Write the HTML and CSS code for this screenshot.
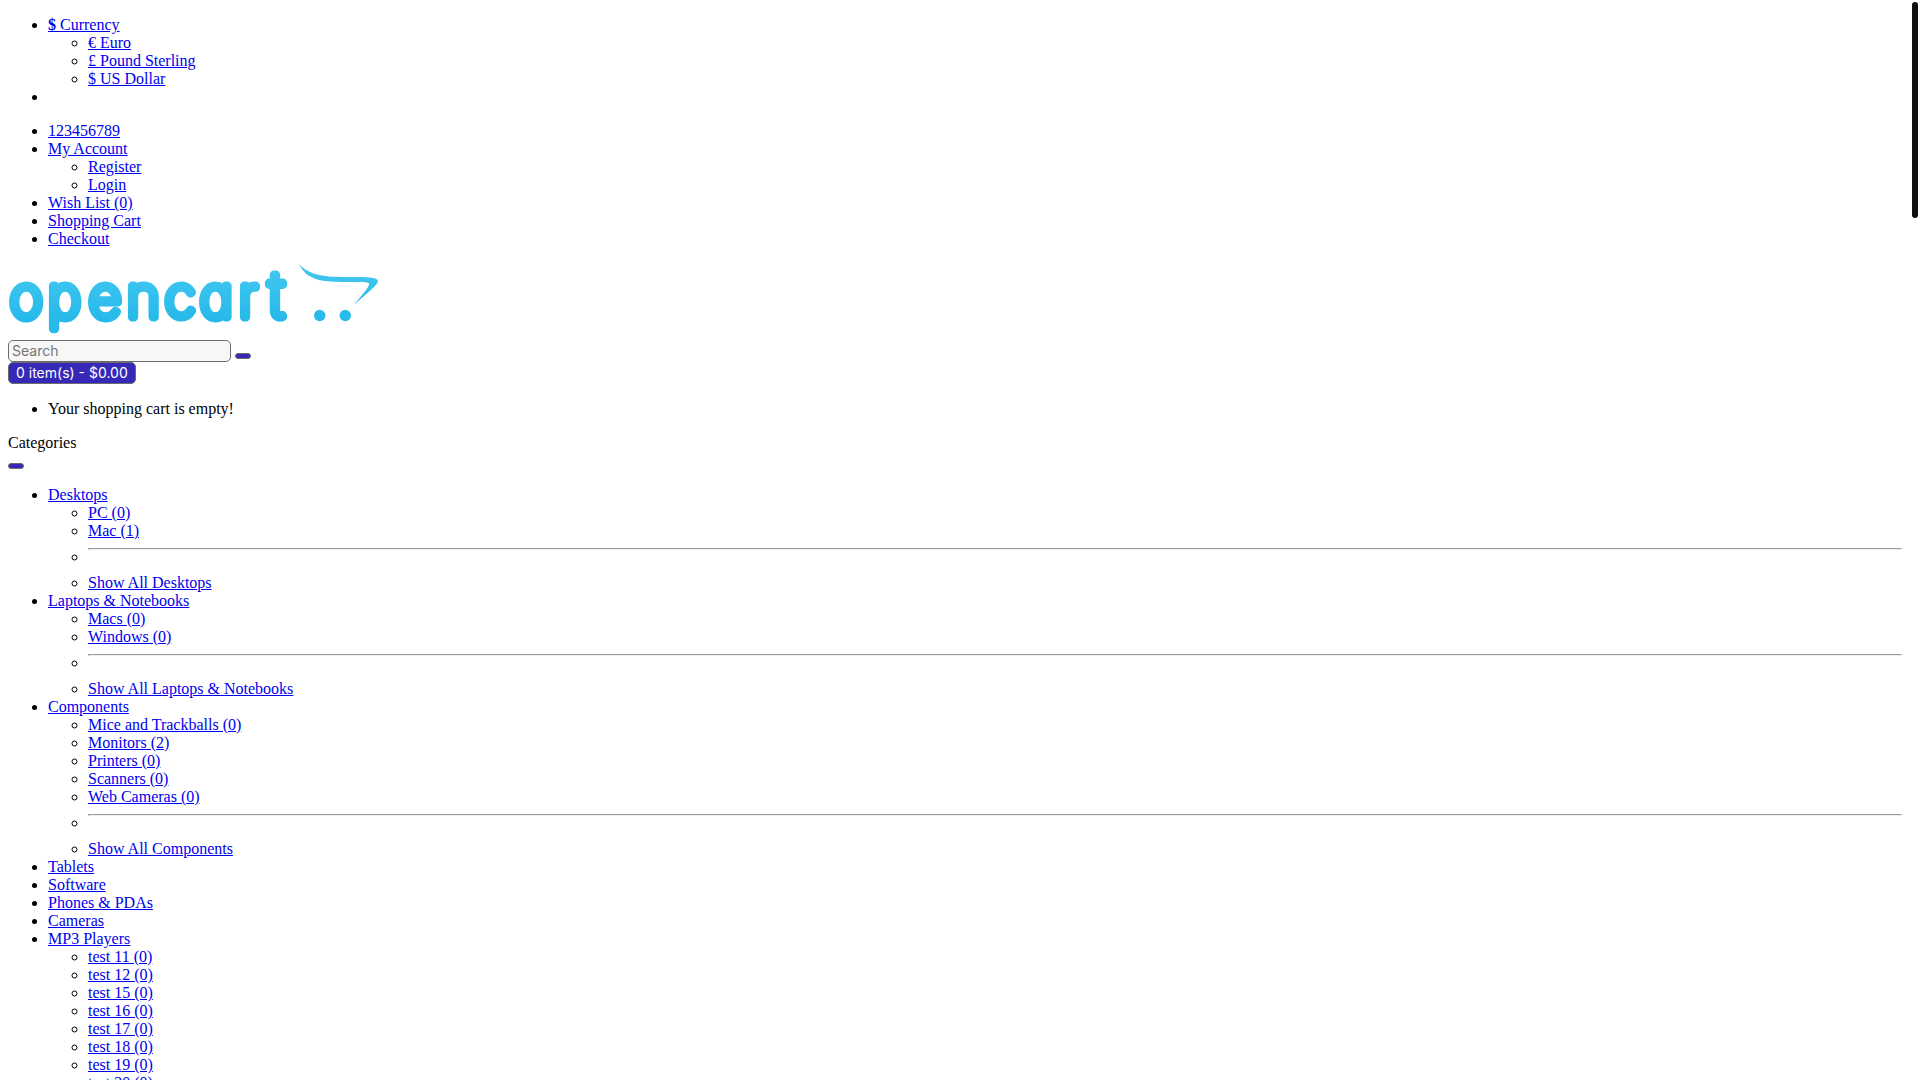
FILE: index.html
```html
<!DOCTYPE html>
<html lang="en">
<head>
<meta charset="utf-8">
<title>Your Store</title>
<link rel="stylesheet" href="styles.css">
</head>
<body>
<div class="page">
  <nav aria-label="Top">
    <ul>
      <li><a href="#"><strong>$</strong> Currency</a>
        <ul>
          <li><a href="#">€ Euro</a></li>
          <li><a href="#">£ Pound Sterling</a></li>
          <li><a href="#">$ US Dollar</a></li>
        </ul>
      </li>
      <li></li>
    </ul>
    <ul>
      <li><a href="#">123456789</a></li>
      <li><a href="#">My Account</a>
        <ul>
          <li><a href="#">Register</a></li>
          <li><a href="#">Login</a></li>
        </ul>
      </li>
      <li><a href="#">Wish List (0)</a></li>
      <li><a href="#">Shopping Cart</a></li>
      <li><a href="#">Checkout</a></li>
    </ul>
  </nav>
  <header>
    <div class="brand">
      <a href="#" aria-label="Your Store"><svg class="logo" viewBox="0 0 371 72" width="371" height="72">
        <defs>
          <linearGradient id="sky" gradientUnits="userSpaceOnUse" x1="0" y1="0" x2="0" y2="72">
            <stop offset="0" stop-color="#44c8f0"/>
            <stop offset="0.8" stop-color="#26b9ea"/>
          </linearGradient>
        </defs>
        <text class="wordmark" y="53" x="2 40 81 119 157 192 231">opencar</text>
        <text class="wordmark wordmark-tall" y="53" x="261">t</text>
        <path fill="url(#sky)" d="M291 0C302 12 318 13 340 13C357 13 370 13 370 17C370 21 358 30 346 41C351 34 359 26 361 21C362 18 358 18 348 18C332 18 322 18 311 16C300 13 295 8 291 0Z"/>
        <circle fill="url(#sky)" cx="311.700" cy="51.500" r="5.700"/>
        <circle fill="url(#sky)" cx="337.300" cy="51.500" r="5.700"/>
      </svg></a>
    </div>
    <div>
      <input class="search" type="text" placeholder="Search" aria-label="Search">
      <button class="btn" type="button" aria-label="Submit search"></button>
    </div>
    <div class="cart">
      <button class="btn" type="button">0 item(s) - $0.00</button>
      <ul>
        <li>Your shopping cart is empty!</li>
      </ul>
    </div>
  </header>
  <nav aria-label="Categories">
    <div>Categories</div>
    <button class="btn" type="button" aria-label="Toggle categories"></button>
    <ul>
      <li><a href="#">Desktops</a>
        <ul>
          <li><a href="#">PC (0)</a></li>
          <li><a href="#">Mac (1)</a></li>
          <li><hr></li>
          <li><a href="#">Show All Desktops</a></li>
        </ul>
      </li>
      <li><a href="#">Laptops &amp; Notebooks</a>
        <ul>
          <li><a href="#">Macs (0)</a></li>
          <li><a href="#">Windows (0)</a></li>
          <li><hr></li>
          <li><a href="#">Show All Laptops &amp; Notebooks</a></li>
        </ul>
      </li>
      <li><a href="#">Components</a>
        <ul>
          <li><a href="#">Mice and Trackballs (0)</a></li>
          <li><a href="#">Monitors (2)</a></li>
          <li><a href="#">Printers (0)</a></li>
          <li><a href="#">Scanners (0)</a></li>
          <li><a href="#">Web Cameras (0)</a></li>
          <li><hr></li>
          <li><a href="#">Show All Components</a></li>
        </ul>
      </li>
      <li><a href="#">Tablets</a></li>
      <li><a href="#">Software</a></li>
      <li><a href="#">Phones &amp; PDAs</a></li>
      <li><a href="#">Cameras</a></li>
      <li><a href="#">MP3 Players</a>
        <ul>
          <li><a href="#">test 11 (0)</a></li>
          <li><a href="#">test 12 (0)</a></li>
          <li><a href="#">test 15 (0)</a></li>
          <li><a href="#">test 16 (0)</a></li>
          <li><a href="#">test 17 (0)</a></li>
          <li><a href="#">test 18 (0)</a></li>
          <li><a href="#">test 19 (0)</a></li>
          <li><a href="#">test 20 (0)</a></li>
        </ul>
      </li>
    </ul>
  </nav>
</div>
<div class="scroll-thumb" aria-hidden="true"></div>
</body>
</html>
```

FILE: styles.css
```css
body {
  margin: 0;
  background: #fff;
  color: #000;
  font-family: "Times New Roman", "Liberation Serif", serif;
  font-size: 16px;
}

.page {
  box-sizing: border-box;
  height: 100vh;
  padding: 0 18px 0 8px;
  overflow-y: auto;
  scrollbar-width: none;
}

a {
  color: #0000ee;
}

.logo {
  overflow: visible;
}

.wordmark {
  font-family: Inter, sans-serif;
  font-size: 56px;
  font-weight: 100;
  font-feature-settings: "cv11";
  fill: url(#sky);
  stroke: url(#sky);
  stroke-width: 9px;
  stroke-linecap: round;
  stroke-linejoin: round;
}

.wordmark-tall {
  font-size: 62px;
}

.search,
.btn {
  border: 1px solid #6b6b6b;
  border-radius: 5px;
  font-family: Inter, sans-serif;
  font-size: 14px;
}

.search {
  box-sizing: border-box;
  width: 223px;
  height: 22px;
  padding: 0 3px 2px;
  background: #f7f7f7;
}

.search::placeholder {
  color: #757575;
}

.btn {
  padding: 2px 7px;
  background: #3629b7;
  color: #fff;
  line-height: 16px;
}

.scroll-thumb {
  position: fixed;
  top: 2px;
  right: 2px;
  width: 6px;
  height: 20vh;
  border-radius: 3px;
  background: #111;
}
```
